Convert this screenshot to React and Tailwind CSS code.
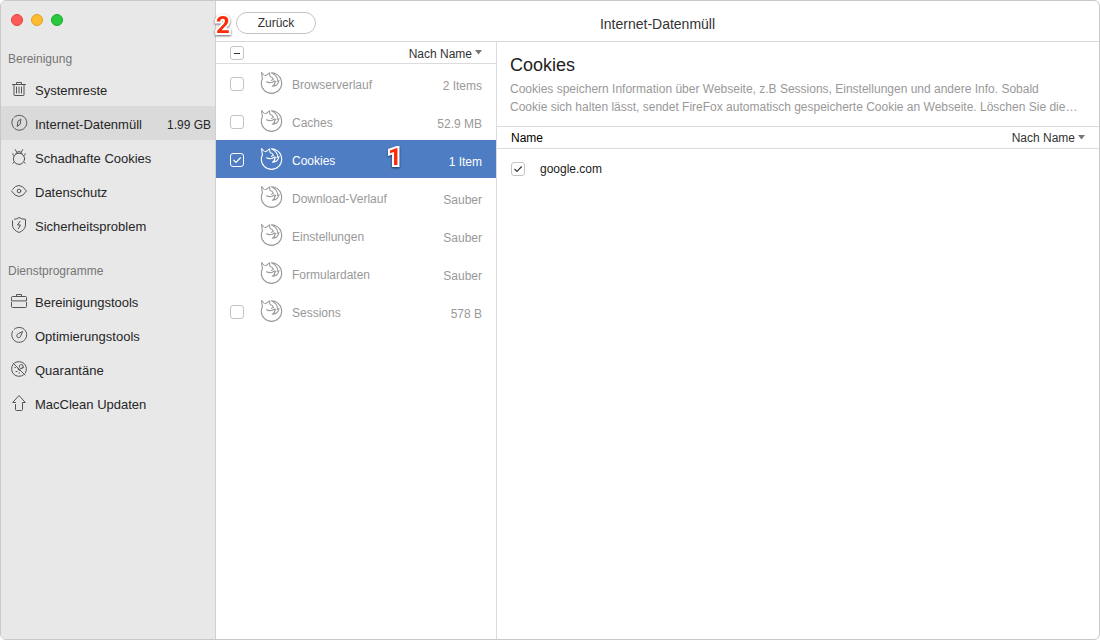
import { useState } from "react";

const iconProps = {
  width: 18,
  height: 18,
  viewBox: "0 0 18 18",
  fill: "none",
  stroke: "currentColor",
  strokeWidth: 1,
  strokeLinecap: "round",
  strokeLinejoin: "round",
  "aria-hidden": true,
};

const TrashIcon = () => (
  <svg {...iconProps}>
    <path d="M2.5 4.5h13M6.5 4.5v-2h5v2M4 4.5v10.5q0 .5.5 .5h9q.5 0 .5-.5V4.5M6.5 7v6M9 7v6M11.5 7v6" />
  </svg>
);

const CompassIcon = () => (
  <svg {...iconProps}>
    <path d="M4.4 3A7.5 7.5 0 1 1 3 4.6" />
    <path d="M10.8 5.5L10.2 10.2 7.2 12.5 7.8 7.8z" />
  </svg>
);

const BugIcon = () => (
  <svg {...iconProps}>
    <circle cx="9" cy="10.8" r="5.6" />
    <path d="M5.8 5.9Q6.3 3.6 9 3.6T12.2 5.9M6.6 4L5.3 1.6M11.4 4L12.7 1.6M4.2 7.6L2.8 6.6V5.8M13.8 7.6L15.2 6.6V5.8M3.9 14.2L2.8 15.3M14.1 14.2L15.2 15.3" />
  </svg>
);

const EyeIcon = () => (
  <svg {...iconProps}>
    <path d="M2.6 7.2Q5.3 3.5 9 3.5T16.5 9Q13 14.5 9 14.5T1.5 9" />
    <circle cx="9" cy="9" r="1.8" />
  </svg>
);

const ShieldIcon = () => (
  <svg {...iconProps}>
    <path d="M4.5 3.3Q7 3.1 9 1.5Q11.5 3.3 15.5 3.3V9Q15.3 14 9 16.5Q2.7 14 2.5 9V4.8" />
    <path d="M10 5.3L7.5 9H10.5L8.3 12.7" />
  </svg>
);

const ToolboxIcon = () => (
  <svg {...iconProps}>
    <path d="M6.5 4.5v-2h5v2M1.5 8.5V5.5q0-1 1-1h13q1 0 1 1v3zM1.5 10.5v4q0 1 1 1h13q1 0 1-1v-4" />
  </svg>
);

const GaugeIcon = () => (
  <svg {...iconProps}>
    <path d="M4.2 3.2A7.5 7.5 0 1 1 2.6 5.2" />
    <path d="M12.5 5.8L10.6 10.2A2 2 0 1 1 8 7.8z" />
  </svg>
);

const QuarantineIcon = () => (
  <svg {...iconProps}>
    <path d="M4.8 2.8A7.5 7.5 0 0 1 15.2 13.2M13.4 15A7.5 7.5 0 0 1 2.9 4.6M3 3L15 15" />
    <path d="M9.3 7.2A2 2 0 1 1 11.4 8.6M10 9L13.5 7.2M5 7.5h.5M6 11.5h1M9 13h.5M9.5 10.5L7.8 9" />
  </svg>
);

const UpdateIcon = () => (
  <svg {...iconProps}>
    <path d="M5.5 8.5H2.7L9 1.5L15.3 8.5H12.5V15.5q0 1-1 1h-5q-1 0-1-1V10.5" />
  </svg>
);

const FoxIcon = () => (
  <svg
    width="24"
    height="24"
    viewBox="0 0 24 24"
    fill="none"
    stroke="currentColor"
    strokeWidth="1.1"
    strokeLinejoin="round"
    strokeLinecap="round"
    aria-hidden="true"
  >
    <path d="M1.7 1.7Q3.6 4.7 5.8 4.7Q7.4 3.3 9.6 1.9Q9.3 4.4 10.4 5.8Q12.4 5.9 13.4 8.2L11.4 9.4" />
    <path d="M1.7 1.7Q1.6 5 2.5 7.4Q1.3 9.9 1.3 12.2A10.2 10.2 0 1 0 21.7 12.2Q21.4 5 14.6 2.3Q13 1.7 11.4 1.8Q17.6 4.6 17.8 10.4" />
    <path d="M6.6 10.8Q8.8 12.2 12.4 11.3Q14 9.6 16 10.4L14.6 11.6Q15.2 13.8 12.4 15.2Q17.8 15.4 19 9.4" />
  </svg>
);

const groups = [
  {
    title: "Bereinigung",
    items: [
      { label: "Systemreste", Icon: TrashIcon },
      { label: "Internet-Datenmüll", Icon: CompassIcon, size: "1.99 GB" },
      { label: "Schadhafte Cookies", Icon: BugIcon },
      { label: "Datenschutz", Icon: EyeIcon },
      { label: "Sicherheitsproblem", Icon: ShieldIcon },
    ],
  },
  {
    title: "Dienstprogramme",
    items: [
      { label: "Bereinigungstools", Icon: ToolboxIcon },
      { label: "Optimierungstools", Icon: GaugeIcon },
      { label: "Quarantäne", Icon: QuarantineIcon },
      { label: "MacClean Updaten", Icon: UpdateIcon },
    ],
  },
];

const categories = [
  { name: "Browserverlauf", info: "2 Items", selectable: true },
  { name: "Caches", info: "52.9 MB", selectable: true },
  { name: "Cookies", info: "1 Item", selectable: true },
  { name: "Download-Verlauf", info: "Sauber" },
  { name: "Einstellungen", info: "Sauber" },
  { name: "Formulardaten", info: "Sauber" },
  { name: "Sessions", info: "578 B", selectable: true },
];

const Checkbox = ({ label, checked, mixed, light, onChange }) => (
  <span className="relative flex size-3.5 shrink-0">
    <input
      type="checkbox"
      aria-label={label}
      checked={checked}
      onChange={onChange}
      ref={(el) => {
        if (el) el.indeterminate = Boolean(mixed);
      }}
      className={`size-3.5 appearance-none rounded-[3px] border ${light ? "border-white" : "border-[#c4c4c4] bg-white"}`}
    />
    {(checked || mixed) && (
      <svg
        className={`pointer-events-none absolute inset-0 ${light ? "text-white" : "text-[#333]"}`}
        width="14"
        height="14"
        viewBox="0 0 14 14"
        fill="none"
        stroke="currentColor"
        strokeWidth="1.1"
      >
        {mixed ? <path d="M4 7.5h6" /> : <path d="M3.5 7L6 9.5L10.7 4.5" />}
      </svg>
    )}
  </span>
);

const SortSelect = ({ label }) => (
  <span className="relative inline-flex items-center text-[#333]">
    <select aria-label={label} className="field-sizing-content appearance-none bg-transparent pt-0.5 pr-2.5 text-xs">
      <option>Nach Name</option>
    </select>
    <svg className="pointer-events-none absolute right-0" width="7" height="5" viewBox="0 0 7 5" fill="#777">
      <path d="M0 0h7L3.5 4.5z" />
    </svg>
  </span>
);

const Marker = ({ children }) => (
  <span className="font-[Roboto,sans-serif] text-2xl leading-6 font-bold text-[#fb2b09] [-webkit-text-stroke:4px_white] [paint-order:stroke_fill] drop-shadow-[0_1px_1px_rgba(0,0,0,0.6)]">
    {children}
  </span>
);

const Sidebar = ({ active, onSelect }) => (
  <nav className="w-[215px] shrink-0 border-r border-[#d0d0d0] bg-[#e8e8e8]">
    <div className="flex gap-2 px-2.5 pt-[13px]">
      <button aria-label="Schließen" className="size-3 rounded-full border border-[#e0443e] bg-[#fc5b57]" />
      <button aria-label="Minimieren" className="size-3 rounded-full border border-[#dfa023] bg-[#fdbc2e]" />
      <button aria-label="Vergrößern" className="size-3 rounded-full border border-[#1aab29] bg-[#28c83f]" />
    </div>
    <div className="flex flex-col gap-4 pt-5">
      {groups.map((group) => (
        <section key={group.title}>
          <h2 className="flex h-[26px] items-center px-[7px] text-xs text-[#757575]">{group.title}</h2>
          {group.items.map(({ label, Icon, size }) => (
            <button
              key={label}
              onClick={() => onSelect(label)}
              className={`flex h-[34px] w-full items-center gap-[7px] pr-1 pl-[9px] text-[13px] text-[#262626] ${active === label ? "bg-[#dadada]" : ""}`}
            >
              <span className="text-[#555]">
                <Icon />
              </span>
              <span className="pt-1">{label}</span>
              {size && <span className="ml-auto pt-1 text-xs">{size}</span>}
            </button>
          ))}
        </section>
      ))}
    </div>
  </nav>
);

const App = () => {
  const [active, setActive] = useState("Internet-Datenmüll");
  const [selected, setSelected] = useState("Cookies");
  const [checked, setChecked] = useState({ Cookies: true });

  const toggle = (name) => setChecked((prev) => ({ ...prev, [name]: !prev[name] }));

  const selectable = categories.filter((c) => c.selectable);
  const count = selectable.filter((c) => checked[c.name]).length;
  const all = count === selectable.length;

  const toggleAll = () => setChecked(Object.fromEntries(selectable.map((c) => [c.name, !all])));

  return (
    <div className="h-screen bg-white pb-0.5 font-['Liberation_Sans',Arial,sans-serif]">
      <div className="flex h-full overflow-hidden rounded-md border border-[#c8c8c8] bg-white">
        <Sidebar active={active} onSelect={setActive} />

        <div className="flex min-w-0 flex-1 flex-col">
          <header className="relative flex h-[41px] shrink-0 items-center border-b border-[#d8d8d8] pt-1 pl-5">
            <button className="h-[22px] w-20 rounded-full border border-[#c4c4c4] bg-white text-xs text-[#333]">
              Zurück
            </button>
            <h1 className="flex-1 pt-0.5 pr-[100px] text-center text-sm text-[#333]">Internet-Datenmüll</h1>
            <div className="absolute top-3 left-0 flex">
              <Marker>2</Marker>
            </div>
          </header>

          <div className="flex min-h-0 flex-1">
            <section className="w-[281px] shrink-0 border-r border-[#dcdcdc]">
              <div className="flex h-[22px] items-center justify-between border-b border-[#dcdcdc] px-3.5">
                <Checkbox label="Alle auswählen" checked={all} mixed={count > 0 && !all} onChange={toggleAll} />
                <SortSelect label="Kategorien sortieren" />
              </div>
              <ul>
                {categories.map(({ name, info, selectable: canSelect }) => {
                  const on = selected === name;
                  return (
                    <li
                      key={name}
                      className={`relative flex h-[38px] items-center px-3.5 text-xs ${on ? "bg-[#4e7dc3] text-white" : "text-[#999]"}`}
                    >
                      <span className="w-[30px] pt-0.5">
                        {canSelect && (
                          <Checkbox label={name} checked={Boolean(checked[name])} light={on} onChange={() => toggle(name)} />
                        )}
                      </span>
                      <button onClick={() => setSelected(name)} className="flex flex-1 items-center gap-2">
                        <FoxIcon />
                        <span className="pt-1">{name}</span>
                        <span className="ml-auto pt-1.5">{info}</span>
                      </button>
                      {name === "Cookies" && (
                        <span className="pointer-events-none absolute inset-y-0 left-[172px] flex items-center pb-1">
                          <Marker>1</Marker>
                        </span>
                      )}
                    </li>
                  );
                })}
              </ul>
            </section>

            <main className="min-w-0 flex-1">
              <div className="h-[85px] overflow-hidden border-b border-[#dcdcdc] px-[13px] pt-[11px]">
                <h2 className="text-lg leading-6 text-[#222]">Cookies</h2>
                <p className="pt-[3px] text-xs leading-[18px] text-[#999]">
                  Cookies speichern Information über Webseite, z.B Sessions, Einstellungen und andere Info. Sobald
                  <br />
                  Cookie sich halten lässt, sendet FireFox automatisch gespeicherte Cookie an Webseite. Löschen Sie die…
                </p>
              </div>
              <table className="w-full text-xs">
                <thead>
                  <tr className="h-[21px] border-b border-[#dcdcdc]">
                    <th className="pt-0.5 pl-3.5 text-left font-normal text-black">Name</th>
                    <th className="pr-3.5 text-right font-normal">
                      <SortSelect label="Einträge sortieren" />
                    </th>
                  </tr>
                </thead>
                <tbody>
                  <tr className="h-[42px]">
                    <td colSpan={2} className="px-3.5">
                      <div className="flex items-center gap-[15px] text-[#222]">
                        <Checkbox
                          label="google.com"
                          checked={Boolean(checked.Cookies)}
                          onChange={() => toggle("Cookies")}
                        />
                        <span>google.com</span>
                      </div>
                    </td>
                  </tr>
                </tbody>
              </table>
            </main>
          </div>
        </div>
      </div>
    </div>
  );
};

export default App;
